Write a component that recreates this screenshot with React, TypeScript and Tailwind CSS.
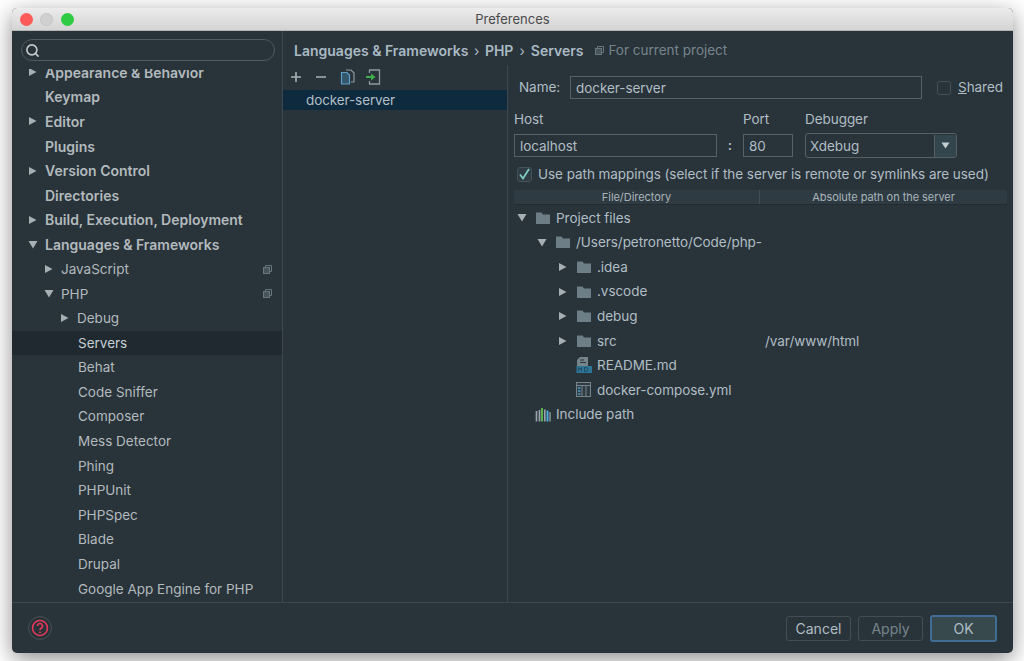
import { Search } from 'lucide-react';

const sidebarItems = [
  { name: 'Appearance & Behavior', bold: true, arrow: 'right', indent: 'pl-[17px]' },
  { name: 'Keymap', bold: true, indent: 'pl-[33px]' },
  { name: 'Editor', bold: true, arrow: 'right', indent: 'pl-[17px]' },
  { name: 'Plugins', bold: true, indent: 'pl-[33px]' },
  { name: 'Version Control', bold: true, arrow: 'right', indent: 'pl-[17px]' },
  { name: 'Directories', bold: true, indent: 'pl-[33px]' },
  { name: 'Build, Execution, Deployment', bold: true, arrow: 'right', indent: 'pl-[17px]' },
  { name: 'Languages & Frameworks', bold: true, arrow: 'down', indent: 'pl-[17px]' },
  { name: 'JavaScript', arrow: 'right', indent: 'pl-[33px]', copy: true },
  { name: 'PHP', arrow: 'down', indent: 'pl-[33px]', copy: true },
  { name: 'Debug', arrow: 'right', indent: 'pl-[49px]' },
  { name: 'Servers', indent: 'pl-[66px]', selected: true },
  { name: 'Behat', indent: 'pl-[66px]' },
  { name: 'Code Sniffer', indent: 'pl-[66px]' },
  { name: 'Composer', indent: 'pl-[66px]' },
  { name: 'Mess Detector', indent: 'pl-[66px]' },
  { name: 'Phing', indent: 'pl-[66px]' },
  { name: 'PHPUnit', indent: 'pl-[66px]' },
  { name: 'PHPSpec', indent: 'pl-[66px]' },
  { name: 'Blade', indent: 'pl-[66px]' },
  { name: 'Drupal', indent: 'pl-[66px]' },
  { name: 'Google App Engine for PHP', indent: 'pl-[66px]' },
];

const treeRows = [
  { name: 'Project files', arrow: 'down', icon: 'folder', indent: 'pl-[3px]' },
  { name: '/Users/petronetto/Code/php-', arrow: 'down', icon: 'folder', indent: 'pl-[23px]' },
  { name: '.idea', arrow: 'right', icon: 'folder', indent: 'pl-[44px]' },
  { name: '.vscode', arrow: 'right', icon: 'folder', indent: 'pl-[44px]' },
  { name: 'debug', arrow: 'right', icon: 'folder', indent: 'pl-[44px]' },
  { name: 'src', arrow: 'right', icon: 'folder', indent: 'pl-[44px]', remote: '/var/www/html' },
  { name: 'README.md', icon: 'md', indent: 'pl-[44px]' },
  { name: 'docker-compose.yml', icon: 'yml', indent: 'pl-[44px]' },
  { name: 'Include path', icon: 'lib', indent: 'pl-[3px]' },
];

function Arrow({ dir, className = '' }: { dir?: string; className?: string }) {
  return (
    <span className="w-[16px] shrink-0 flex items-center">
      {dir === 'right' && (
        <svg width="9" height="10" viewBox="0 0 9 10" className={className}><path d="M1 1l7.500 4L1 9z" fill="#a7b0b4" /></svg>
      )}
      {dir === 'down' && (
        <svg width="10" height="9" viewBox="0 0 10 9" className={className}><path d="M0.500 1h9L5 8.500z" fill="#a7b0b4" /></svg>
      )}
    </span>
  );
}

function TreeIcon({ kind }: { kind: string }) {
  if (kind === 'folder') {
    return (
      <svg width="16" height="14" viewBox="0 0 16 14">
        <path d="M1 1.500h5.500l1.500 2h7v9.500H1z" fill="#6d7e87" />
      </svg>
    );
  }
  if (kind === 'md') {
    return (
      <svg width="16" height="18" viewBox="0 0 16 18">
        <path d="M4 1h8v9H1V4z" fill="#76858c" />
        <path d="M4 4h4M4 6.500h6" stroke="#29333a" strokeWidth="1" />
        <rect x="0.500" y="10" width="15.500" height="7" fill="#2f7596" />
        <path d="M2.500 15.500v-4l1.500 2 1.500-2v4M8.500 11.500v4h1.500a2 2 0 0 0 0-4z" stroke="#1f4d66" strokeWidth="1" fill="none" />
      </svg>
    );
  }
  if (kind === 'yml') {
    return (
      <svg width="15" height="15" viewBox="0 0 15 15">
        <rect x="0.500" y="0.500" width="14" height="14" fill="#2f3b42" stroke="#76858c" />
        <path d="M0.500 3.500h14M6 3.500v11M10 3.500v11" stroke="#76858c" />
        <path d="M2 6h2.500M2 9h2.500M2 12h2.500" stroke="#4f9cc8" strokeWidth="1.600" />
      </svg>
    );
  }
  return (
    <svg width="16" height="15" viewBox="0 0 16 15">
      <path d="M1.500 4v10.500M4.500 3v11.500" stroke="#98a4a9" strokeWidth="1.700" />
      <path d="M7 1v13.500" stroke="#5fc04f" strokeWidth="1.800" />
      <path d="M9.800 2.500v12" stroke="#98a4a9" strokeWidth="1.700" />
      <path d="M12.500 3.500v11" stroke="#4fb4e8" strokeWidth="1.800" />
      <path d="M15 5v9.500" stroke="#98a4a9" strokeWidth="1.300" />
    </svg>
  );
}

function CopyMark() {
  return (
    <svg width="9" height="9" viewBox="0 0 9 9" fill="none" stroke="#68767d" strokeWidth="1">
      <path d="M2.500 2v-1.500h6v6h-1.500" />
      <rect x="0.500" y="2.500" width="6" height="6" fill="#68767d" fillOpacity="0.5" />
    </svg>
  );
}

function Sidebar() {
  return (
    <aside className="w-[271px] shrink-0 flex flex-col border-r border-[#3d474d]">
      <div className="h-[38px] shrink-0 pl-[9px] pr-[7px] pt-[8px]">
        <div className="h-[22px] rounded-full border border-[#505a5f] flex items-center pl-[3px]">
          <Search size={15} strokeWidth={2.6} color="#c3cace" />
        </div>
      </div>
      <div className="flex-1 overflow-hidden">
        <div className="-mt-[9px]">
          {sidebarItems.map((item) => (
            <div
              key={item.name}
              className={`h-[24.6px] flex items-center pr-[10px] ${item.indent} ${
                item.selected ? 'bg-[#1f292f] text-[#c6cfd3]' : 'text-[#b3babd]'
              } ${item.bold ? 'font-semibold text-[14px]' : 'text-[13.5px]'}`}
            >
              {item.arrow && <Arrow dir={item.arrow} className="-ml-[1px]" />}
              <span>{item.name}</span>
              {item.copy && <span className="ml-auto flex"><CopyMark /></span>}
            </div>
          ))}
        </div>
      </div>
    </aside>
  );
}

function ServerList() {
  return (
    <div className="w-[225px] shrink-0 flex flex-col border-r border-[#3d474d]">
      <div className="h-[25px] shrink-0 flex items-center gap-[13px] pl-[7px] pb-[1px]">
        <svg width="12" height="12" viewBox="0 0 12 12"><path d="M6 1v10M1 6h10" stroke="#a9b2b6" strokeWidth="1.600" /></svg>
        <svg width="12" height="12" viewBox="0 0 12 12"><path d="M1 6h10" stroke="#a9b2b6" strokeWidth="1.600" /></svg>
        <svg width="15" height="16" viewBox="0 0 15 16" fill="none">
          <path d="M6 1h5l3 3v9h-3" stroke="#8d9a9f" strokeWidth="1.200" />
          <path d="M1.500 3.500h5.500l2.500 2.500v9h-8z" fill="#34566b" stroke="#5f9fc8" strokeWidth="1.200" />
        </svg>
        <svg width="15" height="16" viewBox="0 0 15 16" fill="none" className="-ml-[2px]">
          <path d="M3.500 4v-3h10v14h-10v-3" stroke="#8d9a9f" strokeWidth="1.300" />
          <path d="M0 7h5V4.500L9.500 8 5 11.500V9H0z" fill="#3fae4a" />
        </svg>
      </div>
      <div className="h-[20px] bg-[#0d2a3f] pl-[23px] flex items-center text-[13.5px] tracking-[-0.1px] text-[#b0bec5]">docker-server</div>
    </div>
  );
}

function Field({ value, className }: { value: string; className: string }) {
  return (
    <div className={`h-[23px] border border-[#566065] flex items-center pl-[5px] pt-[1px] text-[#b0bec5] ${className}`}>
      {value}
    </div>
  );
}

function ServerForm() {
  return (
    <div className="flex-1 min-w-0 pl-[6px] pr-[6px] text-[13.5px] tracking-[-0.05px] text-[#b0bec5]">
      <div className="flex items-center pt-[11px] h-[34px]">
        <span className="w-[56px] pl-[5px]">Name:</span>
        <Field value="docker-server" className="w-[352px]" />
        <span className="ml-[15px] w-[14px] h-[14px] rounded-[3px] border border-[#43535c]" />
        <span className="ml-[7px]"><span className="underline">S</span>hared</span>
      </div>
      <div className="flex mt-[9px] h-[25px]">
        <span className="w-[229px] pt-[1px]">Host</span>
        <span className="w-[62px] pt-[1px]">Port</span>
        <span className="pt-[1px]">Debugger</span>
      </div>
      <div className="flex items-center h-[25px]">
        <Field value="localhost" className="w-[203px]" />
        <span className="w-[26px] text-center font-semibold">:</span>
        <Field value="80" className="w-[50px]" />
        <div className="ml-[12px] w-[152px] h-[25px] rounded-[3px] border border-[#566065] flex items-center pl-[4px] pt-[1px]">
          <span className="flex-1">Xdebug</span>
          <span className="w-[22px] h-full -mt-[1px] bg-[#34464d] border-l border-[#566065] flex items-center justify-center rounded-r-[3px]">
            <svg width="9" height="7" viewBox="0 0 9 7"><path d="M0.500 0.500h8L4.500 6.500z" fill="#c6cfd3" /></svg>
          </span>
        </div>
      </div>
      <div className="flex items-center mt-[8px] h-[16px] pl-[3px]">
        <span className="w-[15px] h-[15px] rounded-[3px] border border-[#43535c] bg-[#2f3c43] flex items-center justify-center">
          <svg width="13" height="13" viewBox="0 0 13 13" fill="none"><path d="M2 6.500l3 4L11 1" stroke="#80cbc4" strokeWidth="1.800" /></svg>
        </span>
        <span className="ml-[6px] pt-[1px] whitespace-nowrap">Use path mappings (select if the server is remote or symlinks are used)</span>
      </div>
      <div className="flex h-[15px] mt-[8px] bg-[#2f3b43] border-b border-[#222b30] text-[11px] leading-[15px] text-[#a9b4b9] text-center">
        <span className="w-[246px] border-r border-[#424e55]">File/Directory</span>
        <span className="flex-1">Absolute path on the server</span>
      </div>
      <div className="pt-[0.500px]">
        {treeRows.map((row) => (
          <div key={row.name} className="h-[24.6px] flex items-center">
            <div className={`w-[251px] shrink-0 flex items-center whitespace-nowrap overflow-hidden ${row.indent}`}>
              <Arrow dir={row.arrow} />
              <span className="w-[21px] shrink-0 flex items-center ml-[2px]">
                <TreeIcon kind={row.icon} />
              </span>
              <span>{row.name}</span>
            </div>
            {row.remote && <span>{row.remote}</span>}
          </div>
        ))}
      </div>
    </div>
  );
}

function Footer() {
  return (
    <footer className="h-[51px] shrink-0 border-t border-[#3d474d] flex items-center pl-[16px] pr-[16px]">
      <span className="w-[24px] h-[24px] rounded-full border border-[#465056] flex items-center justify-center">
        <svg width="18" height="18" viewBox="0 0 18 18" fill="none" stroke="#e8385a" strokeWidth="1.600">
          <circle cx="9" cy="9" r="7.500" />
          <path d="M6.500 7a2.500 2.500 0 1 1 3.600 2.200c-.8.400-1.100.9-1.100 1.800" />
          <path d="M9 12.500v1.500" />
        </svg>
      </span>
      <div className="ml-auto flex items-center gap-[7px] text-[14px] pt-[1px]">
        <button className="w-[65px] h-[25px] rounded-[3px] border border-[#434e54] text-[#b0bec5]">Cancel</button>
        <button className="w-[65px] h-[25px] rounded-[3px] border border-[#434e54] text-[#76858c]">Apply</button>
        <button className="w-[67px] h-[27px] rounded-[3px] border-2 border-[#3f6d94] bg-[#37494d] text-[#b0bec5]">OK</button>
      </div>
    </footer>
  );
}

export default function App() {
  return (
    <div
      className="w-[1024px] h-[661px] overflow-hidden bg-white pt-[8px] pl-[12px]"
      style={{ fontFamily: 'Inter, "Noto Sans", sans-serif' }}
    >
      <div className="w-[1001px] h-[645px] flex flex-col rounded-[5px] overflow-hidden bg-[#29333a] shadow-[0_6px_22px_rgba(0,0,0,0.45)]">
        {/* Title bar */}
        <div className="h-[23px] shrink-0 flex items-center pl-[8px] bg-gradient-to-b from-[#ececec] to-[#d4d4d4] border-b border-[#b5b5b5]">
          <span className="w-[13px] h-[13px] rounded-full bg-[#fc5b57]" />
          <span className="ml-[7px] w-[13px] h-[13px] rounded-full bg-[#d0d0d0] border border-[#c4c4c4]" />
          <span className="ml-[8px] w-[13px] h-[13px] rounded-full bg-[#2fcb43]" />
          <span className="flex-1 text-center text-[13px] text-[#4a4a4a] pr-[62px] pt-[2px]">Preferences</span>
        </div>

        <div className="flex-1 min-h-0 flex">
          <Sidebar />
          <main className="flex-1 min-w-0 flex flex-col">
            <div className="h-[34px] shrink-0 flex items-center pl-[11px] pt-[5px] text-[14px] font-semibold text-[#a9bac4] whitespace-nowrap">
              <span>Languages &amp; Frameworks</span>
              <span className="mx-[5.500px] font-normal">›</span>
              <span>PHP</span>
              <span className="mx-[6px] font-normal">›</span>
              <span>Servers</span>
              <span className="ml-[12px] mr-[4px] flex"><CopyMark /></span>
              <span className="font-normal text-[#76858c] text-[13.5px]">For current project</span>
            </div>
            <div className="flex-1 min-h-0 flex">
              <ServerList />
              <ServerForm />
            </div>
          </main>
        </div>

        <Footer />
      </div>
    </div>
  );
}
